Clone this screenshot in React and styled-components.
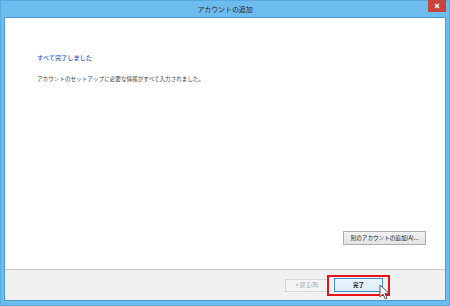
import styled, { createGlobalStyle } from "styled-components";

const GlobalStyle = createGlobalStyle`
  html, body {
    margin: 0;
    padding: 0;
    background: #ffffff;
  }
  body {
    font-family: "Noto Sans CJK JP", "Noto Sans", sans-serif;
  }
`;

const Window = styled.div`
  position: relative;
  box-sizing: border-box;
  width: 450px;
  height: 306px;
  display: flex;
  flex-direction: column;
  background: #6cbdee;
  border: 1px solid #59a9de;
  padding: 0 3px 4px;
`;

const TitleBar = styled.div`
  position: relative;
  height: 16px;
  display: flex;
  align-items: center;
  justify-content: center;
  font-size: 7px;
  color: #2c2c2c;
  letter-spacing: -0.1px;
`;

const CloseButton = styled.div`
  position: absolute;
  top: -1px;
  right: 0;
  width: 18px;
  height: 12px;
  background: #c8433d;
  display: flex;
  align-items: center;
  justify-content: center;
`;

const Client = styled.div`
  flex: 1;
  display: flex;
  flex-direction: column;
  background: #ffffff;
  border: 1px solid #4a9ad4;
`;

const Body = styled.div`
  flex: 1;
  display: flex;
  flex-direction: column;
  padding: 36px 19px 24px 32px;
`;

const Heading = styled.div`
  font-size: 6.2px;
  line-height: 8px;
  color: #2453c4;
  font-weight: 500;
`;

const Message = styled.div`
  margin-top: 13px;
  font-size: 5.6px;
  line-height: 8px;
  color: #3c3c3c;
`;

const Spacer = styled.div`
  flex: 1;
`;

const Button = styled.button`
  position: relative;
  box-sizing: border-box;
  height: ${(p) => p.$h || 14}px;
  width: ${(p) => p.$w}px;
  padding: 0;
  font-family: inherit;
  font-size: 5.6px;
  font-weight: ${(p) => (p.$bold ? 700 : 400)};
  color: ${(p) => (p.disabled ? "#a3a3a3" : "#222222")};
  border: 1px solid
    ${(p) => (p.disabled ? "#d5d5d5" : p.$focused ? "#3c8ad0" : "#adadad")};
  background: ${(p) =>
    p.disabled
      ? "#f4f4f4"
      : p.$focused
      ? "linear-gradient(#eef6fc, #dcecf8)"
      : "linear-gradient(#f2f2f2, #e3e3e3)"};
  display: flex;
  align-items: center;
  justify-content: center;
`;

const AddRow = styled.div`
  display: flex;
  justify-content: flex-end;
`;

const Footer = styled.div`
  height: 30px;
  border-top: 1px solid #c8c8c8;
  background: #f0f0f0;
  display: flex;
  align-items: center;
  justify-content: flex-end;
  gap: 5px;
  padding-right: 62px;
`;

const Highlight = styled.div`
  position: absolute;
  top: -4px;
  bottom: -5px;
  left: -8px;
  right: -8px;
  border: 2px solid #e8121b;
  pointer-events: none;
`;

const Cursor = styled.svg`
  position: absolute;
  left: 44px;
  top: 5px;
`;

export default function App() {
  return (
    <>
      <GlobalStyle />
      <Window>
        <TitleBar>
          アカウントの追加
          <CloseButton>
            <svg width="6" height="6" viewBox="0 0 6 6">
              <path d="M1 1 L5 5 M5 1 L1 5" stroke="#ffffff" strokeWidth="1.4" />
            </svg>
          </CloseButton>
        </TitleBar>
        <Client>
          <Body>
            <Heading>すべて完了しました</Heading>
            <Message>アカウントのセットアップに必要な情報がすべて入力されました。</Message>
            <Spacer />
            <AddRow>
              <Button $w={83}>別のアカウントの追加(A)...</Button>
            </AddRow>
          </Body>
          <Footer>
            <Button $w={44} $h={13} disabled>
              &lt; 戻る(B)
            </Button>
            <Button $w={49} $focused $bold>
              完了
              <Highlight />
              <Cursor width="11" height="16" viewBox="0 0 11 16">
                <path
                  d="M1 1 L1 13 L4 10 L6.2 14.8 L8 14 L5.9 9.4 L10 9.4 Z"
                  fill="#ffffff"
                  stroke="#555555"
                  strokeWidth="1"
                  strokeLinejoin="round"
                />
              </Cursor>
            </Button>
          </Footer>
        </Client>
      </Window>
    </>
  );
}
